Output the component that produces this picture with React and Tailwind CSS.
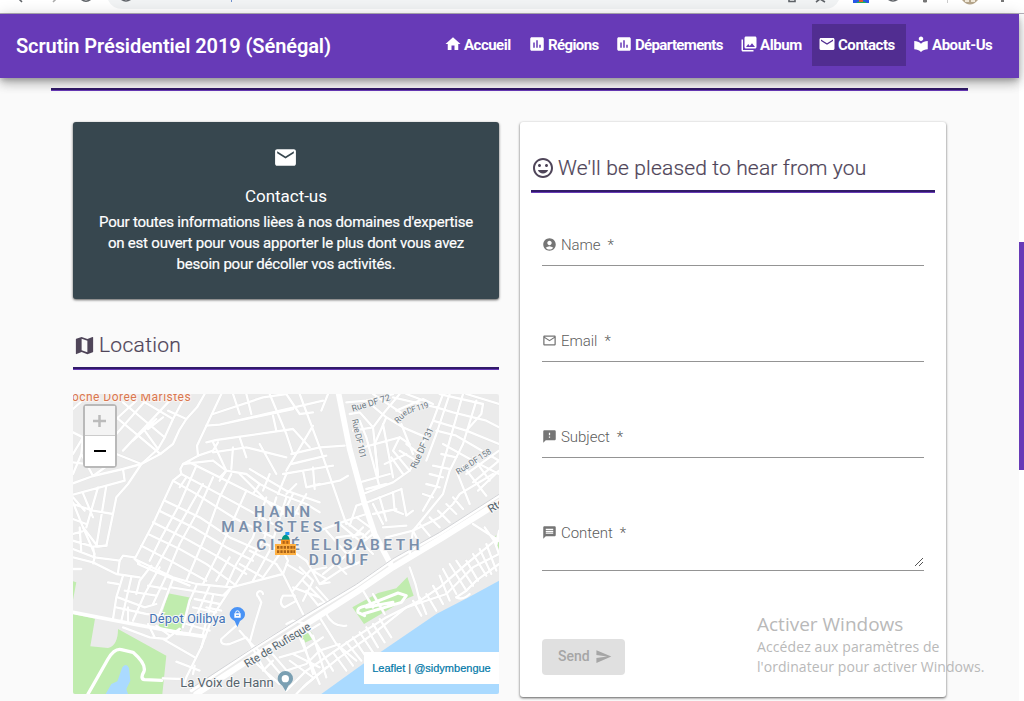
import {
  MdHome,
  MdAssessment,
  MdPhotoLibrary,
  MdMail,
  MdLocalLibrary,
  MdMap,
  MdMood,
  MdAccountCircle,
  MdMailOutline,
  MdFeedback,
  MdMessage,
  MdSend,
} from 'react-icons/md';

const NAV = [
  { label: 'Accueil', Icon: MdHome, box: 'w-[84px]', text: 'tracking-[-0.5px]' },
  { label: 'Régions', Icon: MdAssessment, box: 'w-[87px]', text: 'tracking-[-0.6px]' },
  { label: 'Départements', Icon: MdAssessment, box: 'w-[125px]', text: 'tracking-[-0.65px]' },
  { label: 'Album', Icon: MdPhotoLibrary, box: 'w-[78px]', text: 'tracking-[-0.4px]' },
  { label: 'Contacts', Icon: MdMail, box: 'w-[94px]', text: 'tracking-[-0.45px]', active: true },
  { label: 'About-Us', Icon: MdLocalLibrary, box: 'w-[96px]', text: 'tracking-[-0.45px]' },
];

const FIELDS = [
  { label: 'Name', Icon: MdAccountCircle },
  { label: 'Email', Icon: MdMailOutline },
  { label: 'Subject', Icon: MdFeedback },
];

const MINOR_ROADS = [
  // north-west blocks
  'M395 0 L372 40 L340 75 L318 110 L300 150 L262 180 L205 210 L150 225 L60 246 L0 268',
  'M340 0 L300 75 L275 130 L255 165 L205 210 L165 270 L130 310 L120 360 L100 455 L75 458 L30 400 L0 325',
  'M205 210 L130 180 M262 180 L130 70 M275 130 L150 25 M300 75 L215 25',
  'M255 165 L215 110 M235 0 L130 120 M290 20 L150 170 M190 20 L130 75 M340 75 L285 50 M250 75 L180 140 M225 105 L270 70',
  'M50 0 L0 45 M0 115 L30 130 L25 180 L0 240 M30 130 L0 180 M25 180 L60 246 M0 205 L80 215 M60 246 L110 210',
  'M150 225 L155 260 L100 275 L0 302 M100 275 L70 458 M75 280 L40 400 M0 330 L60 350 L120 360 M30 298 L60 370 M0 375 L40 390 M0 310 L35 350',
  'M100 455 L60 458 L65 490 M30 400 L65 480 M0 440 L60 458 M0 465 L65 490 L140 500 L150 485 L185 490 M20 400 L25 475 M0 420 L28 412',
  'M65 490 L60 508 M0 490 L60 505 L130 540 L200 550 M140 500 L135 535 M0 525 L25 525',
  // blocks north of the neighbourhood
  'M445 0 L372 155 L375 185 L330 210 L322 225 L325 240 L300 260 L240 390 L185 495 L200 510',
  'M400 95 L440 92 L750 20 M440 92 L660 45 M420 60 L570 10 L640 0 M480 0 L500 60 M520 0 L535 60 M590 0 L640 120 L660 180',
  'M680 0 L740 160 L820 390 M640 0 L680 60 L720 55 M400 145 L430 138 L660 105 L710 160 M745 50 L765 0',
  'M720 95 L640 230 M375 185 L420 170 L435 145 M330 210 L420 200 M420 145 L460 230 L440 260 M600 65 L610 110',
  'M420 175 L520 160 L640 190 M480 160 L475 225 M560 150 L610 240 M500 130 L520 190',
  'M655 180 L740 160 L815 155 M655 210 L760 185 M630 240 L690 230 L780 215 M690 230 L700 280 L740 270 M720 220 L725 285 M700 280 L800 260 L825 245',
  // central grid, north-west to south-east
  'M325 240 L400 280 L530 350 L600 390 M300 260 L370 300 L480 370 L600 430',
  'M420 200 L460 230 L520 240 L560 270 L620 300 L700 330 L740 355',
  'M460 230 L440 250 L560 310 L640 350 M350 205 L440 250 M500 240 L600 340 L680 360',
  'M275 320 L380 370 L470 430 L560 470',
  'M258 350 L360 400 L460 460 L540 500 M240 385 L340 435 L430 485 L520 540',
  'M225 420 L320 465 L400 510 L490 575 M205 455 L300 505 L400 560',
  'M185 495 L300 550 L370 570 L475 580 M530 225 L640 290 L740 325',
  // central grid, north-east to south-west
  'M370 215 L320 330 L260 440 L230 500 M250 520 L310 410 L390 270',
  'M420 250 L370 360 L320 450 L280 545 M475 240 L440 310 L400 420 L340 560',
  'M520 290 L480 380 L440 470 L390 570 M470 490 L430 560',
  'M580 310 L540 430 L490 510 L460 575 M610 310 L575 430 L520 520 L485 575 M640 310 L590 470 L540 560',
  'M620 480 L570 550 M660 300 L630 360 M700 300 L660 370 M670 270 L640 300 M560 270 L540 300 M590 240 L570 290 M640 240 L615 300',
  'M340 250 L320 280 M500 510 L570 550 M530 470 L610 510',
  'M475 580 L630 540 L645 500 L630 470 M560 440 L640 480 M630 540 L690 660 M630 540 L610 510 M640 510 L690 540 M670 480 L700 500',
  // south-west blocks
  'M150 545 L130 610 L120 675 M175 550 L145 680 M105 565 L135 570 M155 590 L250 605 M165 640 L165 685',
  'M235 515 L200 560 L190 600 M260 520 L215 600 L180 680 M280 545 L240 630 M300 555 L260 660 M225 575 L280 585',
  'M135 610 L215 640 L250 630 M130 640 L220 660 L270 665 M195 510 L240 530 L350 575',
  'M295 580 L450 605 L475 580 M370 575 L350 620 L330 700 M410 575 L390 620 L350 715 M475 580 L420 665 L385 760 L340 850 L330 880',
  'M365 615 L440 630 M360 640 L430 655 M355 665 L420 680 M340 690 L410 710 M420 605 L390 720',
  'M150 700 L230 730 L280 735 L320 705 M225 690 L245 730 M250 695 L290 725 M270 735 L365 790 M310 720 L395 725 L385 760',
  'M310 803 L380 830 M270 853 L330 855 M365 815 L360 840 M400 640 L445 650',
  // lane loops
  'M570 600 a9 9 0 1 0 -14 8 L565 625 L545 690 L530 745 M500 710 L530 745 L575 830 L600 860 M490 695 L445 735 Q440 755 470 750 L520 730 L545 765',
  'M530 745 L580 790 L640 860 M665 605 L630 605 Q615 630 635 640 L670 620 L660 600 M690 560 L760 630 M660 580 L740 610',
  // east of centre
  'M700 500 L740 570 L770 565 M660 590 L710 530 L760 520 M740 570 L800 530 L870 500 M720 530 L760 555 M680 520 L720 560 L690 620',
  'M740 410 L820 380 L880 360 M800 390 L860 440 L900 480 M760 410 L840 500 M860 440 L890 410 M820 385 L880 430 M870 400 L840 430 M850 370 L905 410 M790 430 L870 420',
  'M750 540 L900 420 M790 510 L820 540 M830 480 L850 510 M830 395 L850 335 L880 325',
  // north-east blocks
  'M870 300 L960 265 L1010 230 L1040 170 L1080 80 L1110 0 M870 330 L985 285 M860 265 L950 240 M880 285 L940 270',
  'M830 60 L860 55 L900 100 L915 240 M860 80 L880 130 L920 280 M820 25 L880 20 L960 0 M840 110 L900 100 L930 60 L980 0',
  'M880 20 L940 70 L990 100 L1060 130 M900 0 L990 60 M940 70 L905 150 L915 250 M930 90 L960 250 M870 160 L980 130 L1010 150',
  'M960 10 L1090 40 M1000 0 L1080 30 L1050 15 L970 50 M985 90 L1020 180 M980 130 L960 170 L1010 230 M980 170 L1030 200 M1000 150 L1040 180 M955 190 L990 240 M935 210 L1000 180',
  'M1130 0 L1090 120 L1060 200 M1170 0 L1130 140 L1090 280 L1050 350 M1210 20 L1170 150 L1130 230 L1110 300 L1020 410',
  'M1090 40 L1140 55 L1240 80 L1278 100 M1080 80 L1180 110 L1278 150 M1090 110 L1150 125 L1278 200 M1100 0 L1230 30 L1225 60 L1180 110',
  'M1110 150 L1200 200 L1278 240 M1105 180 L1150 190 M1080 215 L1130 225 M1070 240 L1110 250 M1060 270 L1100 280 M1050 300 L1080 310 M1180 0 L1278 30',
  'M1150 230 L1190 330 M1170 215 L1240 305 M1278 170 L1180 240 M1278 200 L1200 265 M1278 230 L1215 290 M1200 190 L1250 260',
  'M1020 410 L1100 370 L1140 330 L1160 300 L1260 240 M1140 310 L1170 345 M1120 330 L1150 360 M1095 350 L1130 385 M1070 370 L1100 400 M1040 390 L1070 425 M1020 410 L1010 480',
  'M985 285 L1000 365 L1020 350 M960 295 L965 350 L990 360 M920 310 L940 380 M900 330 L930 390 M900 360 L970 345 M930 400 L1000 395 M940 430 L1020 410 L1040 450',
  // coast
  'M1010 520 Q1030 570 1040 620 M1278 430 L1180 510 L1100 580 L1040 620 L940 670 L830 740 L700 830 L640 890',
  'M1278 480 L1200 520 L1120 600 L1000 640 L900 720 L800 790 L700 870 L670 900 M1278 510 L1210 560 L1180 590 L1150 610',
  'M1110 525 L1150 600 M1130 510 L1180 590 M1150 500 L1200 575 M1100 545 L1130 620 M1080 575 L1110 630 M1060 600 L1090 650 M1040 610 L1060 660 M1020 620 L1045 665',
  'M1180 500 L1215 560 M1200 480 L1240 545 M1220 465 L1255 540 M1240 450 L1270 530 M1260 430 L1278 480 M1150 610 Q1170 620 1190 600',
  'M920 675 L955 730 M900 690 L935 745 M880 700 L915 760 M860 715 L900 775 M840 730 L880 790 M820 745 L865 800 M800 760 L840 815 M780 775 L820 830',
  'M740 670 L790 750 L850 800 M760 660 Q780 700 820 695 M690 740 L720 840 M720 725 L760 850 M680 730 L740 870 M700 700 L780 830 M660 780 L740 820 M650 800 L720 850',
  'M640 830 L700 810 L740 770 L800 750 M620 790 L690 770 L750 730 M740 690 L690 720 M590 770 L650 840 M600 800 L570 830 M540 800 L620 870 M690 880 L760 820',
  'M700 590 L740 640 M730 580 L770 625 L740 630 M640 690 L660 680 L700 690 M870 590 L900 640 M900 600 L935 660',
  'M1200 390 L1278 440 M1235 400 L1270 450 L1278 410',
];

const BUILDING_WINDOWS = [612, 622, 632, 642, 652];

function MapView() {
  return (
    <svg viewBox="0 0 1278 900" className="block h-[300px] w-[426px]" fontFamily="Roboto, sans-serif">
      <rect width="1278" height="900" fill="#ebebeb" />
      <g fill="#c0ecae">
        <path d="M0 660 L66 674 L52 757 L105 762 Q135 755 135 705 L280 785 L268 900 L0 900Z" />
        <path d="M0 562 L10 565 L0 618Z M285 598 L358 612 L322 713 L256 698Z" />
        <path d="M838 640 L915 597 L970 583 L1003 549 L1022 605 L1005 612 L873 690 Z M688 718 L712 710 L727 732 L692 748Z M1257 428 L1278 422 L1278 475Z" />
      </g>
      <path fill="#aadaff" d="M98 900 L115 870 L133 862 L148 820 Q160 805 168 822 L172 860 L160 885 L165 900Z" />
      <path
        d="M45 900 L105 795 Q125 762 145 767 L180 775 Q220 810 213 832 Q200 855 215 857 L266 859"
        fill="none"
        stroke="#fff"
        strokeWidth="10"
        strokeLinecap="round"
        strokeLinejoin="round"
      />
      <path fill="#aadaff" d="M1278 560 L1190 608 L1090 660 L980 735 L870 810 L745 900 L1278 900Z" />
      <g fill="none" strokeLinecap="round" strokeLinejoin="round">
        {MINOR_ROADS.map((d) => (
          <path key={d} d={d} stroke="#e5e5e5" strokeWidth="9" />
        ))}
        {MINOR_ROADS.map((d) => (
          <path key={d} d={d} stroke="#fff" strokeWidth="7" />
        ))}
        <path d="M855 655 Q850 640 880 635 L975 597 L1000 605 L985 625 L870 660 M880 640 L960 625 M855 655 L875 665" stroke="#fff" strokeWidth="9" />
        <path d="M0 655 L180 690 L330 718 L395 728" stroke="#fff" strokeWidth="11" />
        <path d="M797 0 L830 165 L875 330 L905 420 L955 515" stroke="#fff" strokeWidth="17" />
        <path d="M355 890 L540 765 L700 665 L850 575 L960 498 L1100 420 L1278 305" stroke="#fff" strokeWidth="9" />
        <path d="M355 883 L540 762 L700 661 L850 571 L960 494 L1100 415 L1278 301" stroke="#d2d3d6" strokeWidth="3" />
        <path d="M370 900 L540 790 L700 690 L850 595 L960 520 L1110 430 L1278 325" stroke="#fff" strokeWidth="18" />
      </g>
      <g fill="#6d7a84" stroke="#f3f3f3" strokeWidth="5" paintOrder="stroke" fontSize="27">
        <text transform="translate(839 53) rotate(-17)" textLength="120">Rue DF 72</text>
        <text transform="translate(974 89) rotate(-44)" fontSize="25" textLength="44">Rue</text>
        <text transform="translate(1004 60) rotate(-17)" fontSize="25" textLength="68">DF 119</text>
        <text transform="translate(836 77) rotate(77)" fontSize="26" textLength="120">Rue DF 101</text>
        <text transform="translate(1029 226) rotate(-66)" textLength="132" fontSize="28">Rue DF 131</text>
        <text transform="translate(1156 242) rotate(-33)" textLength="120" fontSize="25">Rue DF 158</text>
      </g>
      <g fill="#56646d" stroke="#f7f7f7" strokeWidth="6" paintOrder="stroke" fontSize="34">
        <text transform="translate(523 822) rotate(-31.5)" textLength="226">Rte de Rufisque</text>
        <text transform="translate(1254 358) rotate(-33)">Rte</text>
        <text x="322" y="878" fontSize="39" textLength="280">La Voix de Hann</text>
      </g>
      <text x="229" y="686" fontSize="39" textLength="229" fill="#4674b5" stroke="#f7f7f7" strokeWidth="6" paintOrder="stroke">
        Dépot Oilibya
      </text>
      <text x="-27" y="21" fontSize="36" textLength="380" fill="#d8774f" stroke="#fbf3ef" strokeWidth="6" paintOrder="stroke">
        Roche Doree Maristes
      </text>
      <g fill="#7a8fab" stroke="#f3f3f3" strokeWidth="6" paintOrder="stroke" fontSize="46" fontWeight="600">
        <text x="543" y="368" textLength="168">HANN</text>
        <text x="445" y="413" textLength="362">MARISTES 1</text>
        <text x="550" y="467" textLength="490">CITÉ ELISABETH</text>
        <text x="707" y="512" textLength="178">DIOUF</text>
      </g>
      <path d="M493 699 L485 681 Q470 673 470 661 A23 22 0 1 1 516 661 Q516 673 501 681Z" fill="#4a93f5" />
      <path d="M484 658 h19 v13 h-19Z" fill="#fff" />
      <path d="M488 658 v-2 a5.500 5.500 0 0 1 11 0 v2" fill="none" stroke="#fff" strokeWidth="3" />
      <path d="M489 664 h9" stroke="#4a93f5" strokeWidth="3" />
      <path d="M638 892 L628 875 Q614 865 614 854 A23 23 0 1 1 660 854 Q660 865 646 875Z" fill="#7a9fb2" />
      <circle cx="637" cy="854" r="11" fill="#fff" />
      <path d="M637 414 h12 v9 h-10 v4 h-2Z" fill="#2196f3" />
      <path d="M626 438 Q627 424 638 422 Q649 424 650 438Z" fill="#009688" />
      <rect x="624" y="437" width="27" height="14" fill="#f59321" />
      <rect x="606" y="450" width="63" height="33" fill="#ffb142" />
      <g fill="#a96218">
        <path d="M629 441 h6 v8 h-6Z M640 441 h6 v8 h-6Z" />
        {BUILDING_WINDOWS.map((x) => (
          <path key={x} d={`M${x} 456 h7 v8 h-7Z M${x} 469 h7 v8 h-7Z`} />
        ))}
        <path d="M661 456 h5 v8 h-5Z M661 469 h5 v8 h-5Z" />
      </g>
    </svg>
  );
}

function BrowserEdge() {
  return (
    <div className="flex h-[14px] shrink-0 items-start border-b border-[#b5b1ba] bg-white">
      <svg className="block h-[13px] w-[1024px]" viewBox="0 0 1024 13">
        <path d="M108 0 Q112 9 123 9 H824 Q835 9 839 0Z" fill="#f1f3f4" />
        <g fill="none" stroke="#5f6368" strokeWidth="1.6">
          <path d="M19 -1 L22 2 M81 -1 Q86 3.5 91 -1 M121 -1 Q126 3 131 -1 M789 -2 V1.500 H795 V-2 M816 2 L820 -1 L825 2 M888 -1 Q893 3 898 -1" />
          <path d="M53 2 L56 -1" stroke="#aaa" />
        </g>
        <path d="M853 0 h16 v3 h-16Z" fill="#2857e8" />
        <path d="M856 3 Q861 -1 867 3Z" fill="#20b455" />
        <path d="M859 0 h4 v2 h-4Z" fill="#e4572e" />
        <path d="M231 0 h1 v2 h-1Z" fill="#6f91cf" />
        <path d="M923 0 h4 v2 q-2 1 -4 0Z M1001 0 h3 v2 h-3Z" fill="#777" />
        <path d="M947 0 h1 v3 h-1Z" fill="#ccc" />
        <path d="M962 0 Q970 9 978 0Z" fill="#b5a58b" />
        <path d="M965 0 h4 v2 h-4Z M971 0 h4 v2 h-4Z" fill="#f0e8d8" />
      </svg>
    </div>
  );
}

function Rule() {
  return <div className="h-[3px] w-full border-b border-[#673ab7] bg-[#311b69]" />;
}

function FieldLabel({ label, Icon }) {
  return (
    <div className="flex h-5 items-center text-[15px] font-light tracking-[-0.05px] text-[#5c5c5c]">
      <Icon className="mb-px mr-1 size-[15px] text-[#757575]" />
      <span className="leading-5">{label}</span>
      <span className="ml-[7px] leading-5">*</span>
    </div>
  );
}

export default function App() {
  return (
    <div className="relative flex h-[701px] w-[1024px] flex-col overflow-hidden bg-white font-['Roboto',sans-serif]">
      <BrowserEdge />
      <div className="flex min-h-0 flex-1">
        <div className="flex w-[1019px] flex-col bg-[#fafafa]">
          <header className="relative z-10 flex h-16 shrink-0 items-center justify-between bg-[#673ab7] pl-4 pr-[17px] text-white shadow-[0_3px_5px_-1px_rgba(0,0,0,0.2),0_6px_10px_rgba(0,0,0,0.2),0_1px_14px_rgba(0,0,0,0.16)]">
            <h1 className="text-xl font-semibold tracking-[-0.09px]">Scrutin Présidentiel 2019 (Sénégal)</h1>
            <nav className="mb-[2px] flex h-[42px] items-stretch">
              {NAV.map(({ label, Icon, box, text, active }) => (
                <a
                  key={label}
                  className={`flex ${box} items-center gap-[2px] whitespace-nowrap pl-[6px] text-[15px] font-bold ${active ? 'bg-[#512d91]' : ''}`}
                >
                  <Icon className="mb-[3px] size-[18px] shrink-0" />
                  <span className={text}>{label}</span>
                </a>
              ))}
            </nav>
          </header>
          <main className="flex-1">
            <div className="ml-[51px] mt-[10px] w-[917px]">
              <Rule />
            </div>
            <div className="ml-[73px] mt-[31px] grid grid-cols-[426px_426px] gap-[21px]">
              <section>
                <div className="flex h-[177px] flex-col items-center rounded-[3px] bg-[#37474f] pt-[23px] text-center text-white shadow-[0_1px_3px_rgba(0,0,0,0.4),0_1px_2px_rgba(0,0,0,0.3)]">
                  <MdMail className="mr-px size-[25px]" />
                  <h2 className="mt-[15px] text-[17px] leading-[22px] tracking-[-0.05px]">Contact-us</h2>
                  <p className="mt-[5px] whitespace-nowrap text-[15px] leading-[21px] tracking-[-0.22px] [-webkit-text-stroke:0.2px_white]">
                    Pour toutes informations lièes à nos domaines d'expertise
                    <br />
                    on est ouvert pour vous apporter le plus dont vous avez
                    <br />
                    besoin pour décoller vos activités.
                  </p>
                </div>
                <h2 className="flex h-[68px] items-end pb-[9px] text-[21px] font-light leading-[26px] tracking-[0.3px] text-[#4f4559] [-webkit-text-stroke:0.2px_#4f4559]">
                  <MdMap className="mb-[1px] mr-[3px] size-[23px]" />
                  Location
                </h2>
                <Rule />
                <div className="relative mt-6 h-[300px] overflow-hidden rounded-[2px]">
                  <MapView />
                  <div className="absolute left-[10px] top-[10px] flex w-[34px] flex-col rounded border-2 border-[#b9b9b9] text-center text-black">
                    <span className="flex h-[30px] items-center justify-center border-b border-[#ccc] bg-[#f4f4f4] text-[#bbb]">
                      <svg className="size-[14px]" viewBox="0 0 14 14">
                        <path d="M0 7h13M6.500 1v12" stroke="currentColor" strokeWidth="2.500" />
                      </svg>
                    </span>
                    <span className="flex h-[30px] items-center justify-center bg-white">
                      <svg className="size-[14px]" viewBox="0 0 14 14">
                        <path d="M1 7h12" stroke="currentColor" strokeWidth="2" />
                      </svg>
                    </span>
                  </div>
                  <div className="absolute bottom-[10px] right-0 flex h-8 w-[135px] items-center justify-center gap-[3px] whitespace-nowrap bg-white font-['Liberation_Sans',sans-serif] text-[11px] text-[#0078a8] [-webkit-text-stroke:0.2px_#0078a8]">
                    <span>Leaflet</span>
                    <span className="text-[#555]">|</span>
                    <span>@sidymbengue</span>
                  </div>
                </div>
              </section>
              <section className="flex h-[575px] flex-col rounded-[3px] bg-white px-[11px] shadow-[0_1px_3px_rgba(0,0,0,0.4),0_1px_2px_rgba(0,0,0,0.3)]">
                <h2 className="flex h-[68px] items-end pb-[9px] text-[21px] font-light leading-[26px] tracking-[0.15px] text-[#4f4559] [-webkit-text-stroke:0.2px_#4f4559]">
                  <MdMood className="mb-[1px] mr-[3px] size-6" />
                  We'll be pleased to hear from you
                </h2>
                <Rule />
                <form className="flex flex-col px-[11px]">
                  {FIELDS.map((field) => (
                    <div key={field.label} className="flex h-24 flex-col pt-[42px]">
                      <FieldLabel {...field} />
                      <div className="mt-[10px] border-b border-[#949494]" />
                    </div>
                  ))}
                  <div className="flex h-[91px] flex-col pt-[42px]">
                    <FieldLabel label="Content" Icon={MdMessage} />
                    <div className="mt-[11px] flex h-[17px] items-end justify-end border-b border-[#949494] pb-[3px]">
                      <svg className="size-[10px]" viewBox="0 0 10 10">
                        <path d="M1 9 L9 1 M5 9 L9 5" stroke="#555" strokeWidth="1" />
                      </svg>
                    </div>
                  </div>
                  <button
                    type="button"
                    className="mt-[67px] flex h-9 w-[83px] items-center gap-[5px] rounded bg-[#e0e0e0] pl-4 text-sm font-medium text-[#a6a6a6]"
                  >
                    <span className="relative top-[-1px]">Send</span>
                    <MdSend className="mb-px size-[17px]" />
                  </button>
                </form>
              </section>
            </div>
          </main>
        </div>
        <div className="w-[5px] bg-white pt-[228px]">
          <div className="h-[228px] bg-[#673ab7]" />
        </div>
      </div>
      <div className="absolute left-[757px] top-[611px] whitespace-nowrap font-['Open_Sans',sans-serif] text-[#b9b9b9]">
        <div className="text-[19px] leading-[26px]">Activer Windows</div>
        <div className="text-[14px] leading-5 tracking-[0.1px]">Accédez aux paramètres de</div>
        <div className="text-[14px] leading-5 tracking-[0.06px]">l'ordinateur pour activer Windows.</div>
      </div>
    </div>
  );
}
